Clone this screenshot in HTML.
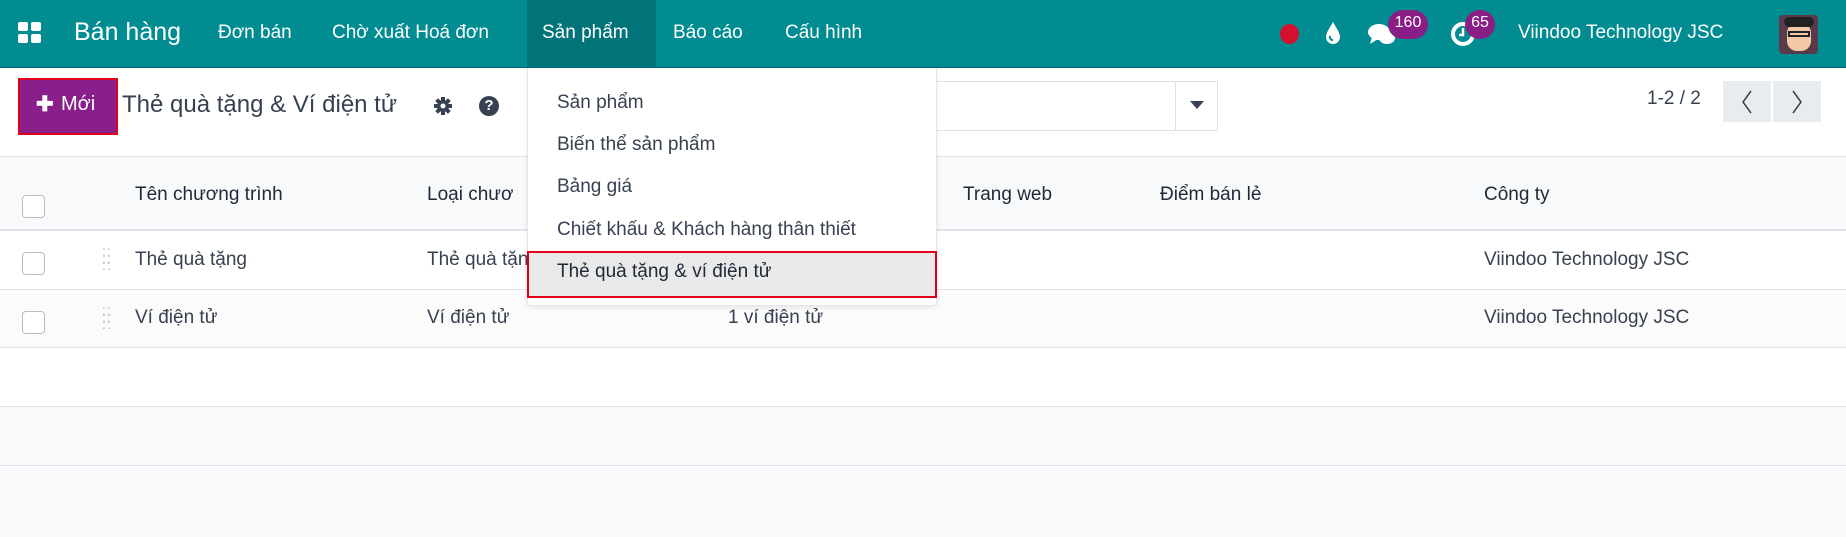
<!DOCTYPE html>
<html><head><meta charset="utf-8"><style>
*{box-sizing:border-box;margin:0;padding:0}
body{width:1846px;height:537px;overflow:hidden;background:#fff;font-family:"Liberation Sans",sans-serif;color:#374151;position:relative}
.a{position:absolute;white-space:nowrap}
.nav{position:absolute;left:0;top:0;width:1846px;height:68px;background:#018c92;border-bottom:1px solid #00666a}
.nt{position:absolute;color:#fff;font-size:19px;top:22px}
.cb{position:absolute;width:23px;height:23px;border:1px solid #b8bcc2;border-radius:4px;background:#fff}
.th{position:absolute;font-size:19px;color:#1f2937;top:184px}
.td{position:absolute;font-size:19px;color:#374151}
.mi{position:absolute;left:557px;font-size:19px;color:#374151}
</style></head><body>
<div class="nav">
 <svg class="a" style="left:18px;top:22px" width="24" height="22"><rect x="0" y="0" width="10" height="9" rx="2" fill="#fff"/><rect x="13" y="0" width="10" height="9" rx="2" fill="#fff"/><rect x="0" y="12" width="10" height="9" rx="2" fill="#fff"/><rect x="13" y="12" width="10" height="9" rx="2" fill="#fff"/></svg>
 <div class="nt" style="left:74px;top:18px;font-size:25px">Bán hàng</div>
 <div class="nt" style="left:218px">Đơn bán</div>
 <div class="nt" style="left:332px">Chờ xuất Hoá đơn</div>
 <div class="a" style="left:527px;top:0;width:129px;height:68px;background:#017479"></div>
 <div class="nt" style="left:542px">Sản phẩm</div>
 <div class="nt" style="left:673px">Báo cáo</div>
 <div class="nt" style="left:785px">Cấu hình</div>
 <div class="a" style="left:1280px;top:24px;width:19px;height:20px;border-radius:50%;background:#d5102f"></div>
 <svg class="a" style="left:1324px;top:21px" width="18" height="24"><path d="M9 1 C13 8 16 12 16 16 A7 7 0 0 1 2 16 C2 12 5 8 9 1Z" fill="#fff"/><path d="M6 15 A3 3 0 0 0 9 19" stroke="#018c92" stroke-width="2" fill="none"/></svg>
 <svg class="a" style="left:1368px;top:20px" width="30" height="28"><ellipse cx="11" cy="12" rx="11" ry="8" fill="#fff"/><path d="M4 17 L2 24 L10 19Z" fill="#fff"/><ellipse cx="19" cy="18" rx="8" ry="6" fill="#fff"/></svg>
 <div class="a" style="left:1388px;top:10px;width:40px;height:29px;border-radius:15px;background:#891e86;color:#fff;font-size:16px;text-align:center;line-height:26px">160</div>
 <svg class="a" style="left:1450px;top:20px" width="28" height="28"><circle cx="13" cy="14" r="10" stroke="#fff" stroke-width="4" fill="none"/><path d="M13 8 V15 H9" stroke="#fff" stroke-width="2.5" fill="none"/></svg>
 <div class="a" style="left:1465px;top:10px;width:30px;height:29px;border-radius:15px;background:#891e86;color:#fff;font-size:16px;text-align:center;line-height:26px">65</div>
 <div class="nt" style="left:1518px">Viindoo Technology JSC</div>
 <div class="a" style="left:1779px;top:15px;width:39px;height:39px;border-radius:4px;background:#5a3a4a;overflow:hidden"><div class="a" style="left:8px;top:8px;width:24px;height:28px;border-radius:10px;background:#f2c9a8"></div><div class="a" style="left:5px;top:2px;width:30px;height:10px;border-radius:6px;background:#222"></div><div class="a" style="left:9px;top:16px;width:22px;height:6px;border:2px solid #222"></div></div>
</div>
<!-- control panel -->
<div class="a" style="left:18px;top:78px;width:100px;height:57px;border:2px solid #e0001a;background:#8a1f8c"></div>
<div class="a" style="left:36px;top:92px;color:#fff;font-size:21px;font-weight:bold">✚</div>
<div class="a" style="left:61px;top:93px;color:#fff;font-size:20px">Mới</div>
<div class="a" style="left:122px;top:91px;font-size:24px;color:#374151">Thẻ quà tặng &amp; Ví điện tử</div>
<svg class="a" style="left:433px;top:96px" width="20" height="20" viewBox="0 0 20 20"><g fill="#374151"><circle cx="10" cy="10" r="6"/><rect x="8" y="1" width="4" height="18"/><rect x="1" y="8" width="18" height="4"/><rect x="8" y="1" width="4" height="18" transform="rotate(45 10 10)"/><rect x="8" y="1" width="4" height="18" transform="rotate(-45 10 10)"/></g><circle cx="10" cy="10" r="2.5" fill="#fff"/></svg>
<div class="a" style="left:479px;top:96px;width:20px;height:20px;border-radius:50%;background:#374151;color:#fff;font-size:15px;font-weight:bold;text-align:center;line-height:20px">?</div>
<div class="a" style="left:930px;top:81px;width:288px;height:50px;border:1px solid #dee2e6;border-left:none"></div>
<div class="a" style="left:1175px;top:81px;width:1px;height:50px;background:#dee2e6"></div>
<div class="a" style="left:1190px;top:101px;width:0;height:0;border-left:7px solid transparent;border-right:7px solid transparent;border-top:8px solid #374151"></div>
<div class="a" style="left:1647px;top:88px;font-size:19px">1-2 / 2</div>
<div class="a" style="left:1723px;top:81px;width:48px;height:41px;background:#e9ecef"></div>
<div class="a" style="left:1773px;top:81px;width:48px;height:41px;background:#e9ecef"></div>
<svg class="a" style="left:1739px;top:89px" width="16" height="26"><path d="M12 2 L4 13 L12 24" stroke="#374151" stroke-width="1.5" fill="none"/></svg>
<svg class="a" style="left:1789px;top:89px" width="16" height="26"><path d="M4 2 L12 13 L4 24" stroke="#374151" stroke-width="1.5" fill="none"/></svg>
<!-- table -->
<div class="a" style="left:0;top:156px;width:1846px;height:75px;background:#f8f9fa;border-top:1px solid #dee2e6;border-bottom:2px solid #dee2e6"></div>
<div class="cb" style="left:22px;top:195px"></div>
<div class="th" style="left:135px">Tên chương trình</div>
<div class="th" style="left:427px">Loại chươ</div>
<div class="th" style="left:963px">Trang web</div>
<div class="th" style="left:1160px">Điểm bán lẻ</div>
<div class="th" style="left:1484px">Công ty</div>
<div class="a" style="left:0;top:231px;width:1846px;height:59px;border-bottom:1px solid #dee2e6"></div>
<div class="a" style="left:0;top:290px;width:1846px;height:58px;background:#fbfbfb;border-bottom:1px solid #dee2e6"></div>
<div class="a" style="left:0;top:348px;width:1846px;height:59px;border-bottom:1px solid #dee2e6"></div>
<div class="a" style="left:0;top:407px;width:1846px;height:130px;background:#f8f9fa"></div>
<div class="a" style="left:0;top:465px;width:1846px;height:1px;background:#dee2e6"></div>
<div class="cb" style="left:22px;top:252px"></div>
<div class="cb" style="left:22px;top:311px"></div>
<div class="a" style="left:102px;top:248px;color:#adb5bd;font-size:14px;line-height:7px;letter-spacing:1px">::<br>::<br>::</div>
<div class="a" style="left:102px;top:307px;color:#adb5bd;font-size:14px;line-height:7px;letter-spacing:1px">::<br>::<br>::</div>
<div class="td" style="left:135px;top:249px">Thẻ quà tặng</div>
<div class="td" style="left:427px;top:249px">Thẻ quà tặng</div>
<div class="td" style="left:1484px;top:249px">Viindoo Technology JSC</div>
<div class="td" style="left:135px;top:307px">Ví điện tử</div>
<div class="td" style="left:427px;top:307px">Ví điện tử</div>
<div class="td" style="left:728px;top:307px">1 ví điện tử</div>
<div class="td" style="left:1484px;top:307px">Viindoo Technology JSC</div>
<!-- dropdown -->
<div class="a" style="left:527px;top:68px;width:410px;height:238px;background:#fff;border:1px solid #e3e5e8;border-top:none;border-radius:0 0 4px 4px;box-shadow:0 2px 6px rgba(0,0,0,.08)"></div>
<div class="mi" style="top:92px">Sản phẩm</div>
<div class="mi" style="top:134px">Biến thể sản phẩm</div>
<div class="mi" style="top:176px">Bảng giá</div>
<div class="mi" style="top:219px">Chiết khấu &amp; Khách hàng thân thiết</div>
<div class="a" style="left:527px;top:251px;width:410px;height:47px;background:#e9e9e9;border:2px solid #e0001a"></div>
<div class="mi" style="top:261px;color:#1f2937">Thẻ quà tặng &amp; ví điện tử</div>
</body></html>
